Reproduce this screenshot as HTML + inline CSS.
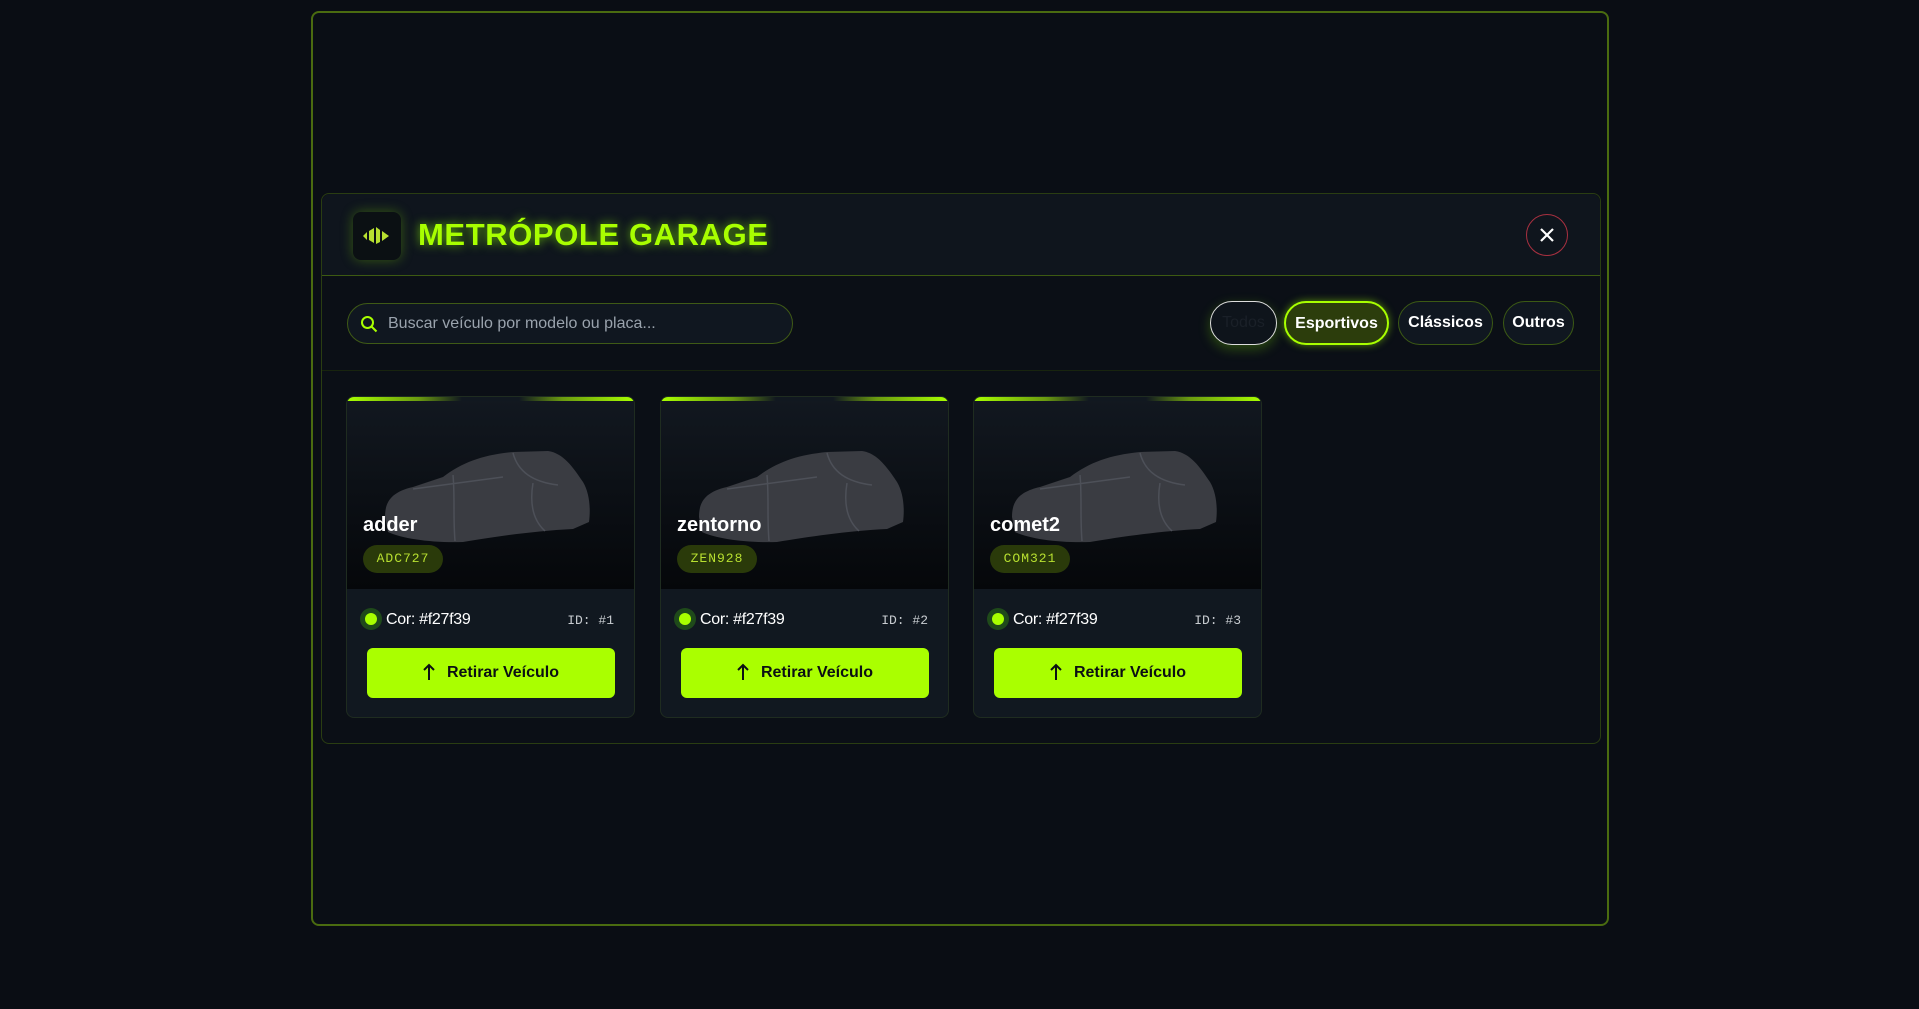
<!DOCTYPE html>
<html><head><meta charset="utf-8"><style>
*{box-sizing:border-box;margin:0;padding:0}
body{width:1919px;height:1009px;background:#0a0d14;font-family:"Liberation Sans",sans-serif;position:relative;overflow:hidden}
.frame{position:absolute;left:311px;top:11px;width:1298px;height:915px;border:2px solid #4a6b10;border-radius:8px;background:#0a0e15}
.modal{position:absolute;left:321px;top:193px;width:1280px;height:551px;border:1px solid #2a3d12;border-radius:8px;background:#0b0f16}
.head{position:absolute;left:0;top:0;right:0;height:82px;background:#0f151d;border-bottom:1px solid #3d5a12;border-radius:8px 8px 0 0}
.logo{position:absolute;left:31px;top:18px;width:48px;height:48px;border-radius:8px;background:#0b1013;box-shadow:0 0 12px rgba(130,220,0,.35)}
.title{position:absolute;left:96px;top:23px;font-size:31px;font-weight:bold;color:#a8ff00;letter-spacing:0.6px;text-shadow:0 0 10px rgba(140,255,0,.7)}
.close{position:absolute;left:1204px;top:20px;width:42px;height:42px;border:1px solid #a83040;border-radius:50%}
.search{position:absolute;left:25px;top:109px;width:446px;height:41px;border:1px solid #3f5a16;border-radius:21px;background:#101720}
.search span{position:absolute;left:40px;top:11px;font-size:16px;color:#9aa3ad}
.fdiv{position:absolute;left:0;right:0;top:176px;border-top:1px solid #18240e}
.pill{position:absolute;top:107px;height:44px;border-radius:22px;font-size:16px;font-weight:bold;color:#fff;text-align:center;line-height:42px;border:1px solid #3c5a14;background:#101720}
.card{position:absolute;top:202px;width:289px;height:322px;border:1px solid #1f2c20;border-radius:8px;background:#111820;overflow:hidden}
.card .bar{position:absolute;left:0;right:0;top:0;height:4px;background:linear-gradient(90deg,#a8ff00 0%,#6a9a10 25%,#111820 40%,#111820 60%,#6a9a10 75%,#a8ff00 100%)}
.card .img{position:absolute;left:0;top:0;right:0;height:192px;background:linear-gradient(#121820,#05070a)}
.card .name{position:absolute;left:16px;top:117px;font-size:20px;font-weight:bold;color:#fff}
.card .plate{position:absolute;left:16px;top:148px;width:80px;height:28px;border-radius:14px;background:#2a3a0a;color:#b8e030;font-family:"Liberation Mono",monospace;font-size:13px;line-height:28px;text-align:center;letter-spacing:1px}
.card .dot{position:absolute;left:13px;top:211px;width:22px;height:22px;border-radius:50%;background:#1f4a1a}
.card .dot:after{content:"";position:absolute;left:5px;top:5px;width:12px;height:12px;border-radius:50%;background:#a8ff00}
.card .cor{position:absolute;left:39px;top:214px;font-size:16px;color:#fff;letter-spacing:-0.3px}
.card .id{position:absolute;right:20px;top:216px;font-family:"Liberation Mono",monospace;font-size:13px;color:#c8ccd0}
.card .btn{position:absolute;left:20px;top:251px;width:248px;height:50px;border-radius:6px;background:#aaff00;color:#0b1013;font-weight:bold;font-size:16px;text-align:center;line-height:50px}
.card .btn svg{vertical-align:-4px;margin-right:12px}
</style></head><body>
<div class="frame"></div>
<div class="modal">
 <div class="head">
  <div class="logo"><svg width="48" height="48" viewBox="0 0 48 48"><path d="M10 24l4-4v8zM16 19l5-3v15l-5-3zM23 15l4 3v12l-4 2zM29 19l7 5-7 5z" fill="#b8e030"/></svg></div>
  <div class="title">METRÓPOLE GARAGE</div>
  <div class="close"><svg width="40" height="40" viewBox="0 0 40 40"><path d="M14 14l12 12M26 14l-12 12" stroke="#fff" stroke-width="2.2"/></svg></div>
 </div>
 <div class="search"><svg style="position:absolute;left:12px;top:11px" width="18" height="18" viewBox="0 0 18 18"><circle cx="7.5" cy="7.5" r="5.5" stroke="#a8ff00" stroke-width="2" fill="none"/><path d="M11.5 11.5l5 5" stroke="#a8ff00" stroke-width="2"/></svg><span>Buscar veículo por modelo ou placa...</span></div>
 <div class="pill" style="left:888px;width:67px;border:1px solid #ddd;color:#1a2028;font-weight:normal;background:#0e141b;box-shadow:0 4px 12px rgba(120,220,0,.3)">Todos</div>
 <div class="pill" style="left:962px;width:105px;border:2px solid #a8ff00;background:#2c3d0c;box-shadow:0 0 8px rgba(160,255,0,.5)">Esportivos</div>
 <div class="pill" style="left:1076px;width:95px">Clássicos</div>
 <div class="pill" style="left:1181px;width:71px">Outros</div>
 <div class="fdiv"></div>
 <div class="card" style="left:24px"><div class="img"></div><svg style="position:absolute;left:36px;top:50px" width="210" height="100" viewBox="0 0 210 100"><path d="M2 70C2 55 8 45 30 40L60 30C80 15 100 8 130 5L165 4C180 6 190 20 200 35C206 45 208 60 206 75L190 82C150 84 110 90 80 95C50 96 20 92 5 85Z" fill="#3a3c42"/><path d="M30 42C60 38 90 34 120 30M70 28C72 50 70 70 72 94M130 6C135 25 150 35 175 38M150 36C146 60 152 75 162 84" stroke="#4d5058" stroke-width="1.5" fill="none"/></svg><div class="bar"></div><div class="name">adder</div><div class="plate">ADC727</div><div class="dot"></div><div class="cor">Cor: #f27f39</div><div class="id">ID: #1</div><div class="btn"><svg width="12" height="18" viewBox="0 0 12 18"><path d="M6 17V2M1 7l5-5 5 5" stroke="#0b1013" stroke-width="2" fill="none"/></svg>Retirar Veículo</div></div>
 <div class="card" style="left:338px"><div class="img"></div><svg style="position:absolute;left:36px;top:50px" width="210" height="100" viewBox="0 0 210 100"><path d="M2 70C2 55 8 45 30 40L60 30C80 15 100 8 130 5L165 4C180 6 190 20 200 35C206 45 208 60 206 75L190 82C150 84 110 90 80 95C50 96 20 92 5 85Z" fill="#3a3c42"/><path d="M30 42C60 38 90 34 120 30M70 28C72 50 70 70 72 94M130 6C135 25 150 35 175 38M150 36C146 60 152 75 162 84" stroke="#4d5058" stroke-width="1.5" fill="none"/></svg><div class="bar"></div><div class="name">zentorno</div><div class="plate">ZEN928</div><div class="dot"></div><div class="cor">Cor: #f27f39</div><div class="id">ID: #2</div><div class="btn"><svg width="12" height="18" viewBox="0 0 12 18"><path d="M6 17V2M1 7l5-5 5 5" stroke="#0b1013" stroke-width="2" fill="none"/></svg>Retirar Veículo</div></div>
 <div class="card" style="left:651px"><div class="img"></div><svg style="position:absolute;left:36px;top:50px" width="210" height="100" viewBox="0 0 210 100"><path d="M2 70C2 55 8 45 30 40L60 30C80 15 100 8 130 5L165 4C180 6 190 20 200 35C206 45 208 60 206 75L190 82C150 84 110 90 80 95C50 96 20 92 5 85Z" fill="#3a3c42"/><path d="M30 42C60 38 90 34 120 30M70 28C72 50 70 70 72 94M130 6C135 25 150 35 175 38M150 36C146 60 152 75 162 84" stroke="#4d5058" stroke-width="1.5" fill="none"/></svg><div class="bar"></div><div class="name">comet2</div><div class="plate">COM321</div><div class="dot"></div><div class="cor">Cor: #f27f39</div><div class="id">ID: #3</div><div class="btn"><svg width="12" height="18" viewBox="0 0 12 18"><path d="M6 17V2M1 7l5-5 5 5" stroke="#0b1013" stroke-width="2" fill="none"/></svg>Retirar Veículo</div></div>
</div>
</body></html>
